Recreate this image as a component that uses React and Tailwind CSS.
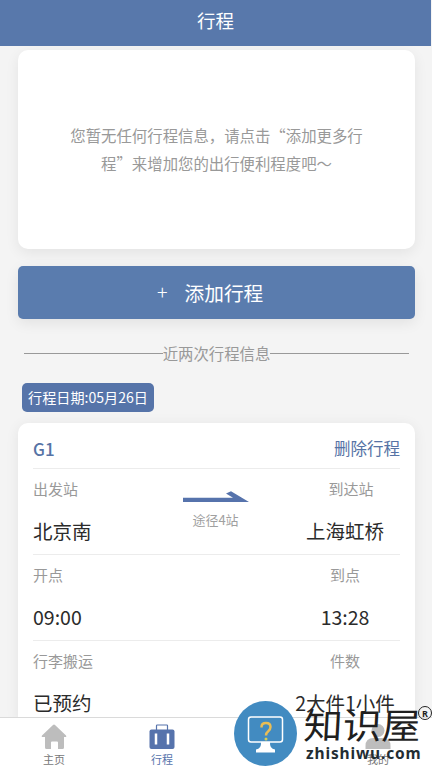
const rows = [
  { left: "出发站", leftValue: "北京南", right: "到达站", rightValue: "上海虹桥", via: "途径4站" },
  { left: "开点", leftValue: "09:00", right: "到点", rightValue: "13:28" },
  { left: "行李搬运", leftValue: "已预约", right: "件数", rightValue: "2大件1小件" },
];

function Arrow() {
  return (
    <svg width="66" height="12" viewBox="0 0 66 12" fill="#5673ac">
      <path d="M0 6.700h50L43 2.500l5-2.300L66 11H0z" />
    </svg>
  );
}

function HomeIcon() {
  return (
    <svg width="26" height="26" viewBox="0 0 26 26" fill="#bdbdbd">
      <path d="M12 1q1-1 2 0l11 10.500q1 1.500-1 1.500h-1v10.500q0 1.500-1.500 1.500H17v-6.500q0-1-1-1h-5q-1 0-1 1V25H5.500Q4 25 4 23.500V13H2q-2 0-1-1.500z" />
    </svg>
  );
}

function SuitcaseIcon() {
  return (
    <svg width="26" height="26" viewBox="0 0 26 26">
      <path d="M7.500 6V1.700q0-.7.700-.7h9.600q.7 0 .7.700V6" fill="none" stroke="#5673ac" strokeWidth="1.200" />
      <rect x="0.500" y="5.500" width="25" height="19.500" rx="2" fill="#5673ac" />
      <path d="M7 9.500v11M19 9.500v11" stroke="#fff" strokeWidth="2.500" />
    </svg>
  );
}

function UserIcon() {
  return (
    <svg width="26" height="26" viewBox="0 0 26 26" fill="#bdbdbd">
      <circle cx="13" cy="6.500" r="6.500" />
      <path d="M.5 25v-3q0-8 8-8h9q8 0 8 8v3z" />
    </svg>
  );
}

const tabs = [
  { label: "主页", icon: <HomeIcon />, color: "text-[#777]" },
  { label: "行程", icon: <SuitcaseIcon />, color: "text-[#5673ac]" },
  { label: "", icon: null, color: "" },
  { label: "我的", icon: <UserIcon />, color: "text-[#777]" },
];

function TripRow({ row }) {
  return (
    <div className="flex h-[86px] justify-between border-t border-[#ececec]">
      <div className="flex w-[100px] flex-col items-start">
        <span className="mt-2 text-[15px] leading-6 text-[#999]">{row.left}</span>
        <span className="mt-4 text-[19.500px] leading-7 whitespace-nowrap text-[#2b2b2b]">{row.leftValue}</span>
      </div>
      {row.via && (
        <div className="flex flex-col items-center pt-[22px]">
          <Arrow />
          <span className="mt-[7px] text-[13px] leading-5 text-[#a0a0a0]">{row.via}</span>
        </div>
      )}
      <div className="mr-2 flex w-[94px] flex-col items-center">
        <span className={`mt-2 text-[15px] leading-6 text-[#999] ${row.via ? "ml-3" : ""}`}>{row.right}</span>
        <span className="mt-4 text-[19.500px] leading-7 whitespace-nowrap text-[#2b2b2b]">{row.rightValue}</span>
      </div>
    </div>
  );
}

function Watermark() {
  return (
    <div className="absolute top-[701px] left-[234px] flex h-[67px] w-[198px] items-start">
      <svg className="shrink-0" width="63" height="66" viewBox="0 0 63 66">
        <ellipse cx="31.500" cy="32.500" rx="31.500" ry="32.500" fill="#428bc1" />
        <rect x="14.500" y="16" width="34" height="25" rx="2.500" fill="none" stroke="#fff" strokeWidth="1.500" />
        <path d="M27 41h9q-.5 7 5 7.500v3H22v-3q5.500-.5 5-7.500z" fill="#fff" />
        <path d="M27.500 26.500v-.5q0-4 4.500-4t4.500 4q0 2.500-2.500 4.500-2 1.500-2 4" fill="none" stroke="#e9bd55" strokeWidth="2.500" />
        <circle cx="32" cy="38" r="1.500" fill="#d5ce55" />
      </svg>
      <div className="relative ml-[7px] w-[128px] text-[#1f1f1f]">
        <div className="mt-[3px] scale-y-[0.92] -skew-x-3 text-[39px] leading-[38px] whitespace-nowrap">知识屋</div>
        <div className="mt-px ml-0.5 font-['Noto_Sans',sans-serif] text-[15.500px] leading-5 font-bold tracking-[0.850px] text-[#222d33]">
          zhishiwu.com
        </div>
        <span className="absolute top-[5px] left-[114px] flex size-[14px] items-center justify-center rounded-full border-[1.500px] border-[#222] font-['Noto_Sans',sans-serif] text-[9px] leading-none font-bold">
          R
        </span>
      </div>
    </div>
  );
}

export default function App() {
  return (
    <div className="relative flex h-[768px] w-[432px] flex-col overflow-hidden bg-[#f4f4f4] font-['Noto_Sans_CJK_SC',sans-serif] font-normal">
      <header className="mr-px flex h-[46px] shrink-0 items-center justify-center bg-[#5878ab] pb-1 text-[18.500px] text-white">
        行程
      </header>

      <main className="flex min-h-0 flex-1 flex-col overflow-hidden pr-[17px] pl-[18px]">
        <section className="mt-1 flex h-[199px] shrink-0 items-center justify-center rounded-[10px] bg-white pb-0.5 text-center text-[15.400px] leading-7 text-[#999] shadow-[0_4px_14px_rgba(0,0,0,0.07)]">
          <p>
            您暂无任何行程信息，请点击“添加更多行
            <br />
            程”来增加您的出行便利程度吧～
          </p>
        </section>

        <button className="mt-[17px] flex h-[53px] shrink-0 items-center rounded-[5px] bg-[#5a7cae] pt-px pl-[139px] text-[19.700px] text-white shadow-[0_4px_14px_rgba(0,0,0,0.08)]">
          <span className="mr-[17px] pb-0.5 font-light">+</span>
          <span>添加行程</span>
        </button>

        <div className="mx-1.5 mt-[22px] flex h-6 shrink-0 items-center text-[15.400px] leading-6 text-[#999]">
          <span className="h-px flex-1 bg-[#999]" />
          <span>近两次行程信息</span>
          <span className="h-px flex-1 bg-[#999]" />
        </div>

        <div className="mt-[18px] ml-1 flex h-[29px] w-[132px] shrink-0 items-center justify-center rounded-[5px] bg-[#5674a9] text-[14.100px] whitespace-nowrap text-white">
          行程日期:05月26日
        </div>

        <section className="mt-[11px] shrink-0 rounded-[10px] bg-white px-[15px] shadow-[0_2px_14px_rgba(0,0,0,0.07)]">
          <div className="flex h-[45px] items-center justify-between pt-1.5 text-[16.500px] text-[#5673a5]">
            <span className="text-[17px] font-medium">G1</span>
            <span>删除行程</span>
          </div>
          {rows.map((row) => (
            <TripRow key={row.left} row={row} />
          ))}
        </section>
      </main>

      <nav className="grid h-[51px] shrink-0 grid-cols-4 border-t border-[#dadada] bg-white">
        {tabs.map((tab, i) => (
          <div key={i} className="flex flex-col items-center pt-[6px]">
            {tab.icon}
            <span className={`mt-px text-[11px] leading-4 ${tab.color}`}>{tab.label}</span>
          </div>
        ))}
      </nav>

      <Watermark />
    </div>
  );
}
